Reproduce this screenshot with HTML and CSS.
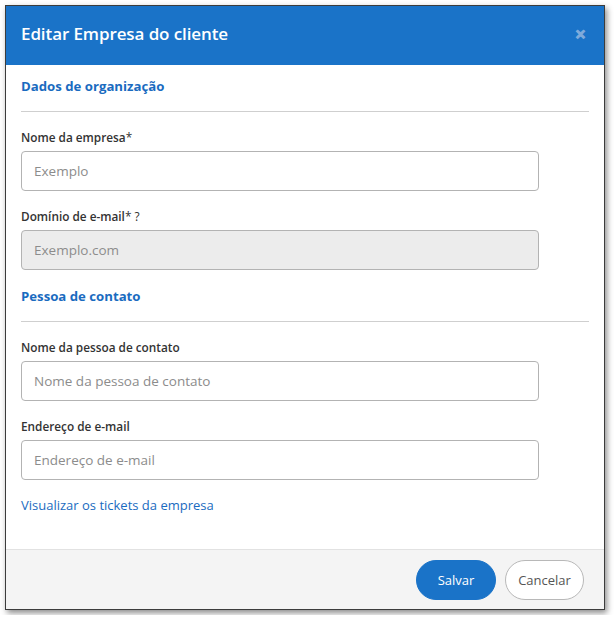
FILE: index.html
```html
<!DOCTYPE html>
<html lang="pt">
<head>
<meta charset="utf-8">
<link rel="stylesheet" href="styles.css">
</head>
<body>
<div class="modal">
  <div class="modal-header">
    <h1 class="modal-title">Editar Empresa do cliente</h1>
    <span class="close">&#x2715;</span>
  </div>
  <div class="modal-body">
    <h2 class="section-title">Dados de organização</h2>
    <hr class="sep">
    <label class="label">Nome da empresa<span class="req">*</span></label>
    <input class="input" type="text" placeholder="Exemplo">
    <label class="label">Domínio de e-mail<span class="req">* ?</span></label>
    <input class="input disabled" type="text" placeholder="Exemplo.com" disabled>
    <h2 class="section-title">Pessoa de contato</h2>
    <hr class="sep">
    <label class="label">Nome da pessoa de contato</label>
    <input class="input" type="text" placeholder="Nome da pessoa de contato">
    <label class="label">Endereço de e-mail</label>
    <input class="input" type="text" placeholder="Endereço de e-mail">
    <a class="link" href="#">Visualizar os tickets da empresa</a>
  </div>
  <div class="modal-footer">
    <button class="btn btn-primary">Salvar</button>
    <button class="btn btn-default">Cancelar</button>
  </div>
</div>
</body>
</html>
```
FILE: styles.css
```css
* { box-sizing: border-box; }
html, body { margin: 0; padding: 0; background: #fff; }
body {
  padding: 5px;
  font-family: "Open Sans", "Noto Sans", sans-serif;
  color: #333;
}
.modal {
  width: 600px;
  height: 605px;
  border: 1px solid #3c3c3c;
  box-shadow: 2px 3px 6px rgba(0,0,0,0.45);
  background: #fff;
  display: flex;
  flex-direction: column;
}
.modal-header {
  background: #1a73c8;
  height: 59px;
  display: flex;
  align-items: center;
  justify-content: space-between;
  padding: 0 18px 4px 15px;
}
.modal-title {
  margin: 0;
  color: #fff;
  font-size: 17px;
  font-weight: 600;
  letter-spacing: -0.1px;
}
.close {
  color: #7eaadb;
  font-size: 13px;
  font-weight: 700;
  -webkit-text-stroke: 1px #7eaadb;
}
.modal-body {
  flex: 1;
  padding: 11px 15px 0 15px;
  display: flex;
  flex-direction: column;
  align-items: flex-start;
}
.section-title {
  margin: 0;
  font-size: 13.2px;
  line-height: 20px;
  font-weight: 700;
  color: #1a6bc0;
}
.sep {
  align-self: stretch;
  border: 0;
  border-top: 1px solid #cfcfcf;
  margin: 15px 0 16px 0;
}
.label {
  font-size: 11.8px;
  line-height: 18px;
  font-weight: 600;
  color: #333;
  margin-bottom: 5px;
}
.req { font-weight: 400; }
.input {
  width: 518px;
  height: 40px;
  border: 1px solid #b3b3b3;
  border-radius: 4px;
  padding: 0 12px;
  font-family: inherit;
  font-size: 13.5px;
  color: #333;
  background: #fff;
  margin: 0 0 16px 0;
}
.input::placeholder { color: #8c8c8c; }
.input.disabled { background: #ececec; }
.link {
  margin-top: -1px;
  font-size: 13px;
  line-height: 20px;
  color: #1a6bc0;
  text-decoration: none;
}
.modal-footer {
  height: 60px;
  background: #f4f4f4;
  border-top: 1px solid #e2e2e2;
  display: flex;
  align-items: center;
  justify-content: flex-end;
  gap: 9px;
  padding: 0 20px 0 0;
}
.btn {
  height: 40px;
  border-radius: 20px;
  font-family: inherit;
  font-size: 13px;
  padding: 0;
  cursor: pointer;
}
.btn-primary {
  width: 80px;
  background: #1a73c8;
  border: 1px solid #1a73c8;
  color: #fff;
}
.btn-default {
  width: 79px;
  background: #fff;
  border: 1px solid #b8b8b8;
  color: #555;
}
```
